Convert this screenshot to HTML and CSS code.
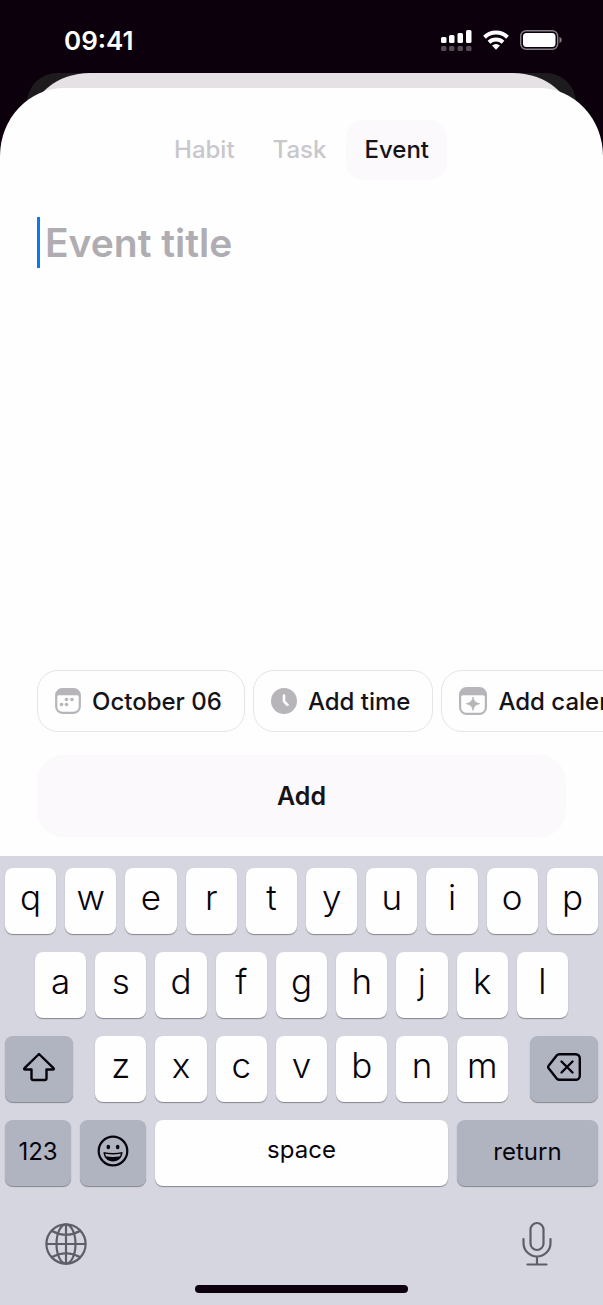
FILE: index.html
```html
<!doctype html>
<html lang="en">
<head>
  <meta charset="UTF-8">
  <meta name="viewport" content="width=device-width, initial-scale=1.0">
  <title>New event</title>
  <link rel="stylesheet" href="styles.css">
</head>
<body>

<header class="status-bar">
  <time class="clock">09:41</time>
  <div class="status-icons">
    <svg width="32" height="24" viewBox="0 0 32 24" fill="#fff">
      <rect x="1" y="9" width="5.500" height="6" rx="1.5"/>
      <rect x="9" y="7" width="5.500" height="8" rx="1.5"/>
      <rect x="17.500" y="5" width="5.500" height="10" rx="1.500"/>
      <rect x="26" y="2" width="5.500" height="13" rx="1.5"/>
      <g opacity=".3">
        <rect x="1" y="18" width="5.500" height="5" rx="1.5"/>
        <rect x="9" y="18" width="5.500" height="5" rx="1.5"/>
        <rect x="17.5" y="18" width="5.500" height="5" rx="1.5"/>
        <rect x="26" y="18" width="5.500" height="5" rx="1.5"/>
      </g>
    </svg>
    <svg width="26" height="20" viewBox="0 0 26 20" fill="none" stroke="#fff" stroke-width="4">
      <path d="M1.500 7.200a16.500 16.500 0 0 1 23 0"/>
      <path d="M6 12.300a10.200 10.200 0 0 1 14 0"/>
      <path d="M13 19.800l-4-4.200a6 6 0 0 1 8 0z" fill="#fff" stroke="none"/>
    </svg>
    <svg width="42" height="20" viewBox="0 0 42 20">
      <rect x=".7" y=".7" width="37" height="18.600" rx="5.500" fill="none" stroke="#fff" stroke-opacity=".5" stroke-width="1.400"/>
      <rect x="3" y="3" width="32.500" height="14" rx="3.500" fill="#fff"/>
      <path d="M39.500 7v6c1.300-.4 2.200-1.600 2.200-3s-.9-2.600-2.200-3z" fill="#fff" fill-opacity=".5"/>
    </svg>
  </div>
</header>

<div class="back-sheet"><div class="back-sheet-top"></div></div>

<main class="sheet">
  <nav class="tabs">
    <button class="tab">Habit</button>
    <button class="tab">Task</button>
    <button class="tab active">Event</button>
  </nav>

  <input class="title-input" type="text" placeholder="Event title" aria-label="Event title">

  <div class="chips">
    <button class="chip">
      <svg width="26" height="26" viewBox="0 0 26 26">
        <rect x="1.200" y="1.200" width="23.600" height="23.600" rx="6" fill="none" stroke="#b7b5b9" stroke-width="2.200"/>
        <path d="M1 9V7a6 6 0 0 1 6-6h12a6 6 0 0 1 6 6v2c-1-1.300-2-1.800-4-1.800H5C3 7.200 2 7.700 1 9z" fill="#b7b5b9"/>
        <g fill="#b7b5b9">
          <circle cx="11.500" cy="11.500" r="1.800"/><circle cx="17" cy="11.500" r="1.800"/>
          <circle cx="6.500" cy="16.500" r="1.800"/><circle cx="11.500" cy="16.500" r="1.800"/>
        </g>
      </svg>
      October 06
    </button>
    <button class="chip">
      <svg width="26" height="26" viewBox="0 0 26 26">
        <circle cx="13" cy="13" r="13" fill="#b7b5b9"/>
        <path d="M13 7.500v5.800l3.500 3.500" fill="none" stroke="#fff" stroke-width="2.600" stroke-linecap="round" stroke-linejoin="round"/>
      </svg>
      Add time
    </button>
    <button class="chip">
      <svg width="28" height="28" viewBox="0 0 28 28">
        <rect x="1.100" y="1.100" width="25.800" height="25.800" rx="6.500" fill="none" stroke="#b7b5b9" stroke-width="2.200"/>
        <path d="M1 10V7a6 6 0 0 1 6-6h14a6 6 0 0 1 6 6v3c-1-1.300-2.500-1.800-4-1.800H5C3.500 8.200 2 8.700 1 10z" fill="#b7b5b9"/>
        <path d="M14 10c1 4.300 2.400 5.700 6.700 6.700-4.300 1-5.700 2.400-6.700 6.700-1-4.300-2.400-5.700-6.700-6.700 4.300-1 5.700-2.400 6.700-6.700z" fill="#b7b5b9" stroke="#b7b5b9" stroke-width=".8" stroke-linejoin="round"/>
      </svg>
      Add calendar
    </button>
  </div>

  <button class="add-button">Add</button>
</main>

<section class="keyboard">
  <div class="key-row">
    <button class="key">q</button>
    <button class="key">w</button>
    <button class="key">e</button>
    <button class="key">r</button>
    <button class="key">t</button>
    <button class="key">y</button>
    <button class="key">u</button>
    <button class="key">i</button>
    <button class="key">o</button>
    <button class="key">p</button>
  </div>
  <div class="key-row middle">
    <button class="key">a</button>
    <button class="key">s</button>
    <button class="key">d</button>
    <button class="key">f</button>
    <button class="key">g</button>
    <button class="key">h</button>
    <button class="key">j</button>
    <button class="key">k</button>
    <button class="key">l</button>
  </div>
  <div class="key-row lower">
    <button class="key dark shift" aria-label="Shift">
      <svg width="34" height="30" viewBox="0 0 34 30" fill="none" stroke="#08040c" stroke-width="2.400" stroke-linejoin="round">
        <path d="M17 2L31.500 16.200q1 1.300-.7 1.300H24.500v8.700q0 1.800-1.800 1.800H11.300q-1.800 0-1.800-1.800v-8.700H3.200q-1.700 0-.7-1.300z"/>
      </svg>
    </button>
    <div class="key-row letters">
      <button class="key">z</button>
      <button class="key">x</button>
      <button class="key">c</button>
      <button class="key">v</button>
      <button class="key">b</button>
      <button class="key">n</button>
      <button class="key">m</button>
    </div>
    <button class="key dark shift" aria-label="Delete">
      <svg width="34" height="28" viewBox="0 0 34 28" fill="none" stroke="#08040c" stroke-width="2.400" stroke-linecap="round" stroke-linejoin="round">
        <path d="M12.500 1.200h16.300a4 4 0 0 1 4 4v17.600a4 4 0 0 1-4 4H12.500a4 4 0 0 1-2.800-1.200L2 15.800q-1.700-1.800 0-3.600L9.700 2.400a4 4 0 0 1 2.800-1.200z"/>
        <path d="M14.500 8.500l11 11M25.500 8.500l-11 11"/>
      </svg>
    </button>
  </div>
  <div class="key-row">
    <button class="key dark label small">123</button>
    <button class="key dark small" aria-label="Emoji">
      <svg width="32" height="32" viewBox="0 0 32 32">
        <circle cx="16" cy="16" r="14.300" fill="none" stroke="#08040c" stroke-width="2.200"/>
        <ellipse cx="11.300" cy="12" rx="1.800" ry="2.200" fill="#08040c"/>
        <ellipse cx="20.700" cy="12" rx="1.800" ry="2.200" fill="#08040c"/>
        <path d="M6.500 17q9.500 2 19 0c0 5.500-4 9.500-9.500 9.500S6.500 22.500 6.500 17z" fill="#08040c"/>
        <path d="M8.200 18.800q7.800 1.400 15.600 0l-.7 2.400q-7.100 1.500-14.200 0z" fill="#b0b4c1"/>
      </svg>
    </button>
    <button class="key label space">space</button>
    <button class="key dark label return">return</button>
  </div>

  <div class="keyboard-footer">
    <button class="icon-button" aria-label="Next keyboard">
      <svg width="42" height="42" viewBox="0 0 42 42" fill="none" stroke="#5e5e68" stroke-width="2.200">
        <circle cx="21" cy="21" r="19.600"/>
        <ellipse cx="21" cy="21" rx="9.500" ry="19.600"/>
        <path d="M21 1.400v39.200M1.400 21h39.200"/>
        <path d="M7 8q14 7.500 28 0M7 34q14-7.500 28 0"/>
      </svg>
    </button>
    <button class="icon-button" aria-label="Dictate">
      <svg width="30" height="46" viewBox="0 0 30 46" fill="none" stroke="#5e5e68" stroke-width="2.200" stroke-linecap="round">
        <rect x="8.500" y="2" width="13" height="27" rx="6.500"/>
        <path d="M1.500 18v4a13.500 13.500 0 0 0 27 0v-4M15 35.500v8M5.500 43.500h19"/>
      </svg>
    </button>
  </div>
  <div class="home-indicator"></div>
</section>

</body>
</html>
```

FILE: styles.css
```css
* {
  box-sizing: border-box;
}

body {
  font-family: Inter, 'Liberation Sans', sans-serif;
  background-color: #0b000c;
  display: flex;
  flex-direction: column;
  min-height: 100vh;
  margin: 0;
  color: #151317;
}

button {
  border: none;
  padding: 0;
  font: inherit;
  color: inherit;
  background: none;
  cursor: pointer;
}

svg {
  display: block;
  flex: none;
}

.status-bar {
  display: flex;
  justify-content: space-between;
  align-items: center;
  height: 73px;
  padding: 7px 41px 0 64px;
}

.clock {
  color: white;
  font-size: 26px;
  font-weight: 600;
}

.status-icons {
  display: flex;
  align-items: center;
  gap: 11px;
}

/* the sheet underneath, only its top edge shows */
.back-sheet {
  height: 60px;
  margin: 0 27px -45px;
  border-radius: 30px 30px 0 0;
  background-color: #1d1b1e;
}

.back-sheet-top {
  height: 100%;
  margin: 0 3px;
  border-radius: 60px 60px 0 0 / 50px 50px 0 0;
  background-color: #e5e1e5;
}

.sheet {
  flex: 1;
  display: flex;
  flex-direction: column;
  padding: 32px 37px 19px;
  border-radius: 64px 64px 0 0 / 68px 68px 0 0;
  background-color: #fefefe;
}

.tabs {
  display: flex;
  justify-content: center;
  gap: 2px;
}

.tab {
  height: 60px;
  padding: 0 18px 2px;
  border-radius: 18px;
  font-size: 24px;
  font-weight: 500;
  color: #c8c7cb;
}

.tab.active {
  background-color: #fbf9fc;
  color: #151317;
}

.title-input {
  height: 51px;
  margin-top: 37px;
  padding: 0 0 0 5px;
  border: none;
  border-left: 3px solid #077af0;
  outline: none;
  background: none;
  font: 600 39px Inter, 'Liberation Sans', sans-serif;
  color: #151317;
}

.title-input::placeholder {
  color: #afadb1;
}

.chips {
  display: flex;
  gap: 8px;
  margin: auto -37px 0 0;
  overflow: hidden;
}

.chip {
  flex: none;
  display: flex;
  align-items: center;
  gap: 11px;
  height: 62px;
  padding: 0 22px 0 17px;
  border: 1px solid #e6e4e7;
  border-radius: 21px;
  font-size: 24px;
  font-weight: 500;
}

.add-button {
  height: 82px;
  margin-top: 23px;
  border-radius: 26px;
  background-color: #fbf9fc;
  font-size: 25px;
  font-weight: 600;
}

.keyboard {
  display: flex;
  flex-direction: column;
  gap: 18px;
  padding: 12px 5px;
  background-color: #d5d6df;
}

.key-row {
  display: flex;
  gap: 9px;
}

.key-row.middle {
  padding: 0 30px;
}

.key-row.lower {
  gap: 22px;
}

.key-row.letters {
  flex: 1;
}

.key {
  flex: 1 1 0;
  min-width: 0;
  display: flex;
  justify-content: center;
  align-items: center;
  height: 66px;
  padding-bottom: 8px;
  border-radius: 8px;
  background-color: #fefefe;
  box-shadow: 0 1px 1px #85868d;
  font-size: 35px;
  font-weight: 350;
  color: #08040c;
}

.key.dark {
  padding-bottom: 4px;
  background-color: #b0b4c1;
}

.key.label {
  font-size: 24px;
  font-weight: 400;
}

.key.space {
  flex: 293 1 0;
}

.key.return {
  flex: 141 1 0;
}

.key.shift {
  flex: 0 0 68px;
}

.key.small {
  flex: 0 0 66px;
}

.keyboard-footer {
  display: flex;
  justify-content: space-between;
  align-items: center;
  height: 46px;
  margin-top: 17px;
  padding: 0 46px 0 40px;
}

.home-indicator {
  align-self: center;
  width: 36%;
  height: 8px;
  border-radius: 4px;
  background-color: #0b000c;
}
```
